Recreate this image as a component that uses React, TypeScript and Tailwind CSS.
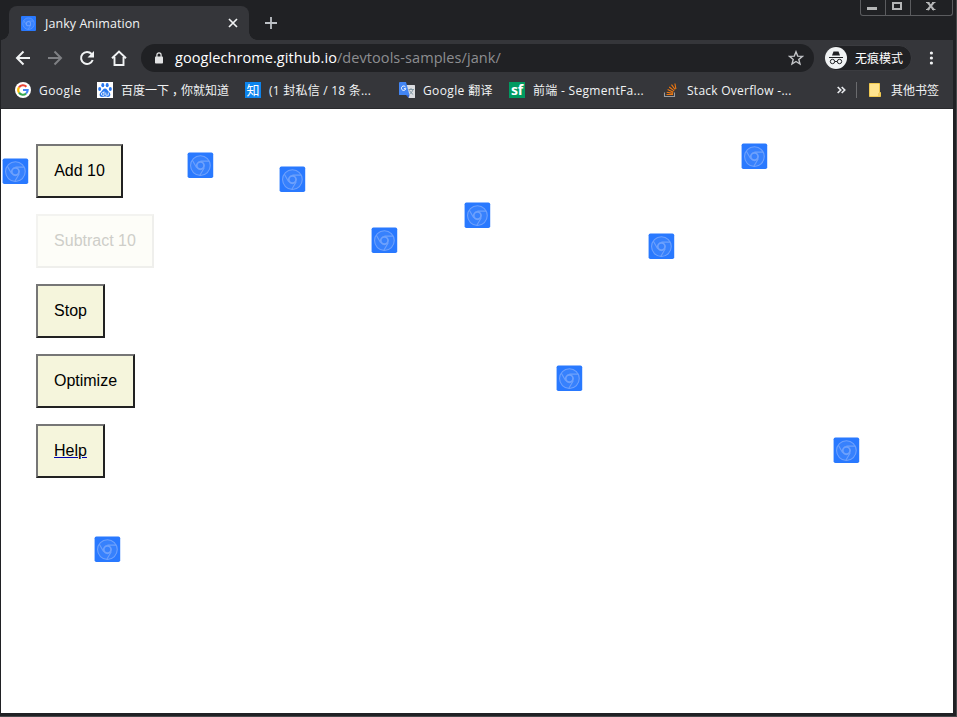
import React from "react";

const ui = "font-['Open_Sans','Noto_Sans_CJK_SC',sans-serif]";

function ChromeMark({ size, viewBox = "0 0 26 26" }: { size: number; viewBox?: string }) {
  return (
    <svg width={size} height={size} viewBox={viewBox} className="block">
      <rect width="26" height="26" rx="1.8" fill="#2979ff" />
      <g fill="none" stroke="#6ea1fc" strokeWidth="1.1">
        <circle cx="13" cy="13.3" r="10" fill="#3781fd" />
        <circle cx="13" cy="13.3" r="3.7" strokeWidth="1.8" />
        <path d="M13 8.8h9.2M9.2 15.4L4.7 7.6M16.9 15.4l-4.6 8" />
      </g>
    </svg>
  );
}

const sprites = [
  [2, 158], [187, 152], [279, 166], [371, 227], [464, 202],
  [556, 365], [648, 233], [741, 143], [833, 437], [94, 536],
];

function Bookmark({ icon, children, className }: { icon: React.ReactNode; children: React.ReactNode; className: string }) {
  return (
    <div className={"flex h-full shrink-0 items-center gap-2 " + className}>
      <span className="block h-4 w-4 shrink-0">{icon}</span>
      <span className="whitespace-pre pt-px">{children}</span>
    </div>
  );
}

const GoogleIcon = (
  <svg width="16" height="16" viewBox="0 0 16 16">
    <circle cx="8" cy="8" r="8" fill="#fff" />
    <g fill="none" strokeWidth="2.1">
      <path d="M4 5.4A4.7 4.7 0 0 1 11.4 4.7" stroke="#ea4335" />
      <path d="M4 5.4a4.7 4.7 0 0 0 0 5.2" stroke="#fbbc05" />
      <path d="M4 10.6a4.7 4.7 0 0 0 7.1.9" stroke="#34a853" />
      <path d="M11.1 11.5A4.7 4.7 0 0 0 12.7 8H8" stroke="#4285f4" />
    </g>
  </svg>
);

const BaiduIcon = (
  <svg width="16" height="16" viewBox="0 0 16 16">
    <path fill="#fff" d="M0 0h16v16H0z" />
    <g fill="#2878f0">
      <ellipse cx="5.8" cy="3.2" rx="1.5" ry="2.1" />
      <ellipse cx="10.2" cy="3.2" rx="1.5" ry="2.1" />
      <ellipse cx="2.7" cy="7" rx="1.5" ry="2" />
      <ellipse cx="13.3" cy="7" rx="1.5" ry="2" />
      <path d="M8 6.5c2 0 2.4 2 4 3.4 2.4 2 1.4 5-1 5-1.3 0-2-.3-3-.3s-1.7.3-3 .3c-2.4 0-3.4-3-1-5C5.6 8.5 6 6.5 8 6.5z" />
    </g>
    <path d="M7 9.3v4H5.6a1.3 1.3 0 0 1 0-2.6H7M8.8 10.5v2.7h2.5v-2.7" fill="none" stroke="#fff" strokeWidth=".8" />
  </svg>
);

const ZhihuIcon = (
  <span className="flex h-4 w-4 items-center justify-center bg-[#0d84ed] font-['Noto_Sans_CJK_SC',sans-serif] text-[13px] leading-4 text-white">知</span>
);

const TranslateIcon = (
  <svg width="16" height="16" viewBox="0 0 16 16">
    <path fill="#dadce0" d="M7 3h8.5a.5.5 0 0 1 .5.5V15.5a.5.5 0 0 1-.5.5H9.5z" />
    <path fill="#4285f4" d="M.5 0H7l3.5 13H.5a.5.5 0 0 1-.5-.5V.5z" />
    <path fill="#3367d6" d="M7 13h3.5L9.5 16z" />
    <path d="M6.5 5A2.2 2.2 0 1 0 6.8 6.7H4.9" fill="none" stroke="#fff" />
    <path d="M9.5 7.5h5.5M12 6v1.5M14 7.5c-.5 2-2 3.5-3.3 4.5M10.5 8.5c.8 1.5 2 3 3.7 4" fill="none" stroke="#78909c" strokeWidth=".9" />
  </svg>
);

const SfIcon = (
  <span className="flex h-4 w-4 items-center justify-center bg-[#009a61] pb-px font-['Open_Sans',sans-serif] text-[14px] font-bold leading-none tracking-[-0.3px] text-white">sf</span>
);

const StackIcon = (
  <svg width="16" height="16" viewBox="0 0 16 16" fill="none">
    <path d="M1.500 10.500v4h10v-4" stroke="#9b9da0" strokeWidth="1.1" />
    <path d="M3.500 12.500h6.500M3.700 10.200l6.300 1.200M4.600 7.600l5.800 2.600M6.200 5l5 3.900M8.500 2.700l3.600 4.800M11.900 1.500l1 5.500" stroke="#f0780f" strokeWidth="1.1" />
  </svg>
);

const FolderIcon = (
  <svg width="16" height="16" viewBox="0 0 16 16">
    <path fill="#ffe48f" d="M2.5 1.5h10v9h1v4h-11z" />
    <path d="M2.5 1.5h10v9h1v4h-11z" fill="none" stroke="#f2ca50" />
    <path d="M12 11v3" stroke="#e7b63c" />
  </svg>
);

function TitleBar() {
  return (
    <div className="flex h-10 items-start bg-[#202124]">
      <div className="flex h-10 w-2 shrink-0 items-end">
        <div className="h-2 w-2 bg-[radial-gradient(circle_at_0_0,#202124_7.5px,#35363a_8px)]" />
      </div>
      <div className="mt-[6px] flex h-[34px] w-60 shrink-0 items-center rounded-t-lg bg-[#35363a] pl-3">
        <ChromeMark size={15} />
        <span className="ml-[9px] w-[183px] whitespace-pre pt-[2px] text-[12.5px] tracking-[0.06px] text-[#f1f3f4]">Janky Animation</span>
        <svg width="10" height="10" viewBox="0 0 10 10" className="block">
          <path d="M1 1l8 8M9 1L1 9" stroke="#f1f3f4" strokeWidth="1.7" />
        </svg>
      </div>
      <div className="flex h-10 w-2 shrink-0 items-end">
        <div className="h-2 w-2 bg-[radial-gradient(circle_at_100%_0,#202124_7.5px,#35363a_8px)]" />
      </div>
      <svg width="12" height="12" viewBox="0 0 12 12" className="mt-[17px] ml-2 block">
        <path d="M6 0v12M0 6h12" stroke="#bdc1c6" strokeWidth="1.8" />
      </svg>
      <div className="ml-auto flex h-4 w-[93px] rounded-b-[3px] border border-t-0 border-[#5b5c5f] bg-[#202124]">
        <div className="w-[25px] border-r border-[#5b5c5f] pt-[7px] pl-[6px]">
          <div className="h-[3px] w-[10px] bg-[#b5b6b7]" />
        </div>
        <div className="w-[25px] border-r border-[#5b5c5f] pt-[2px] pl-[6px]">
          <div className="h-[8px] w-[10px] border-2 border-[#b5b6b7]" />
        </div>
        <svg width="10" height="9" viewBox="0 0 10 9" className="mt-[2px] ml-[15px]">
          <path d="M1.5 0l6.5 8M8 0L1.5 8" stroke="#b5b6b7" strokeWidth="2" />
          <path d="M0 .5h3.5M6 .5h3.5M0 7.5h3.5M6 7.5h3.5" stroke="#b5b6b7" />
        </svg>
      </div>
    </div>
  );
}

function Toolbar() {
  return (
    <div className="flex h-9 items-center">
      <svg width="140" height="36" viewBox="1 40 140 36" className="block shrink-0" fill="none" stroke="#f1f3f4" strokeWidth="2">
        <path d="M30 58H17.5M23.5 51.5L17 58l6.5 6.5" />
        <path d="M48 58h12.5M54.5 51.5L61 58l-6.5 6.5" stroke="#7f8084" />
        <path d="M91.6 54A6 6 0 1 0 92.7 60" />
        <path d="M94 51v6.5h-6.5z" fill="#f1f3f4" stroke="none" />
        <path d="M112 58.2l7-6.7 7 6.7M114.5 57v8h9v-8" strokeWidth="1.9" />
      </svg>
      <div className="flex h-7 w-[673px] shrink-0 items-center rounded-full bg-[#202124] pl-[14px] pr-[10px]">
        <svg width="8" height="12" viewBox="0 0 8 12" className="block">
          <rect y="4.5" width="8" height="7" rx=".8" fill="#e2e3e4" />
          <path d="M1.9 5V3a2.1 2.1 0 0 1 4.2 0v2" fill="none" stroke="#e2e3e4" strokeWidth="1.2" />
        </svg>
        <span className="ml-3 whitespace-pre pb-px text-[14.5px] tracking-[0.07px] text-[#8d8e91]">
          <span className="text-white">googlechrome.github.io</span>
          <span>/devtools-samples/jank/</span>
        </span>
        <svg width="16" height="16" viewBox="0 0 16 16" className="ml-auto block" fill="none" stroke="#c4c6c9" strokeWidth="1.4">
          <path d="M8 1.8l1.7 4.3 4.7.3-3.6 3 1.2 4.6L8 11.5 4 14l1.2-4.6-3.6-3 4.7-.3z" />
        </svg>
      </div>
      <div className="ml-[10px] flex h-[26px] w-[88px] shrink-0 items-center rounded-full border border-[#3b3c40] bg-[#202124]">
        <svg width="22" height="22" viewBox="0 0 22 22" className="block">
          <circle cx="11" cy="11" r="11" fill="#f1f3f4" />
          <path d="M7 8.5l1.5-4.1h5L15 8.5z" fill="#202124" />
          <path d="M4 10.5h14" stroke="#202124" />
          <g fill="none" stroke="#202124" strokeWidth="1">
            <circle cx="7.5" cy="14.5" r="2.2" />
            <circle cx="14.5" cy="14.5" r="2.2" />
            <path d="M9.8 14.5h2.4" />
          </g>
        </svg>
        <span className="ml-2 whitespace-pre pt-px text-[12px] text-white">无痕模式</span>
      </div>
      <svg width="5" height="14" viewBox="0 0 5 14" className="ml-[17px] block" fill="#f1f3f4">
        <circle cx="2.4" cy="2" r="1.6" />
        <circle cx="2.4" cy="7" r="1.6" />
        <circle cx="2.4" cy="12" r="1.6" />
      </svg>
    </div>
  );
}

function Bookmarks() {
  return (
    <div className="flex h-[33px] items-start border-b border-[#292a2d] pl-[14px] text-[12px] text-[#f1f3f4]">
      <div className="flex h-7 shrink-0 items-center">
        <Bookmark icon={GoogleIcon} className="w-[82px] tracking-[0.45px]">Google</Bookmark>
        <Bookmark icon={BaiduIcon} className="w-[148px]">
          百度一下<span className="px-[3px] [font-feature-settings:'halt']">，</span>你就知道
        </Bookmark>
        <Bookmark icon={ZhihuIcon} className="w-[154px] tracking-[0.23px]">(1 封私信 / 18 条...</Bookmark>
        <Bookmark icon={TranslateIcon} className="w-[110px] tracking-[0.38px]">Google 翻译</Bookmark>
        <Bookmark icon={SfIcon} className="w-[154px] tracking-[0.3px]">前端 - SegmentFa...</Bookmark>
        <Bookmark icon={StackIcon} className="w-[174px] tracking-[0.26px]">Stack Overflow -...</Bookmark>
        <svg width="9" height="8" viewBox="0 0 9 8" className="block" fill="none" stroke="#e8eaed" strokeWidth="1.7">
          <path d="M.7 1l3 3-3 3M4.7 1l3 3-3 3" />
        </svg>
        <div className="mr-[10px] ml-[10px] h-4 w-px bg-[#6a6b6e]" />
        <Bookmark icon={FolderIcon} className="">其他书签</Bookmark>
      </div>
    </div>
  );
}

const button = "h-[54px] border-2 bg-[#f5f5dc] text-center text-[16px] leading-[50px] text-black";
const outset = " border-t-[#767676] border-l-[#767676] border-r-[#212121] border-b-[#212121]";

export default function App() {
  return (
    <div className={"relative h-[717px] w-[957px] overflow-hidden border-r border-b border-[#48494b] bg-[#202124] pl-px pr-[3px] " + ui}>
      <TitleBar />
      <div className="bg-[#35363a]">
        <Toolbar />
        <Bookmarks />
      </div>
      <main className="flex h-[604px] flex-col items-start gap-4 bg-white pt-[35px] pl-[35px] font-['Liberation_Sans',Arial,sans-serif]">
        <button className={button + outset + " w-[87px]"}>Add 10</button>
        <button className="h-[54px] w-[118px] border-2 border-t-[#f3f3f0] border-l-[#f3f3f0] border-r-[#efefec] border-b-[#efefec] bg-[#fdfdf8] text-center text-[16px] leading-[50px] text-[#cecec9]" disabled>Subtract 10</button>
        <button className={button + outset + " w-[69px]"}>Stop</button>
        <button className={button + outset + " w-[99px]"}>Optimize</button>
        <button className={button + outset + " w-[69px]"}>
          <a className="underline decoration-[#0000b0] decoration-1">Help</a>
        </button>
      </main>
      {sprites.map(([left, top]) => (
        <div key={left} className="absolute" style={{ left, top }}>
          <ChromeMark size={27} viewBox="-0.6 -0.5 27.4 27.4" />
        </div>
      ))}
    </div>
  );
}
